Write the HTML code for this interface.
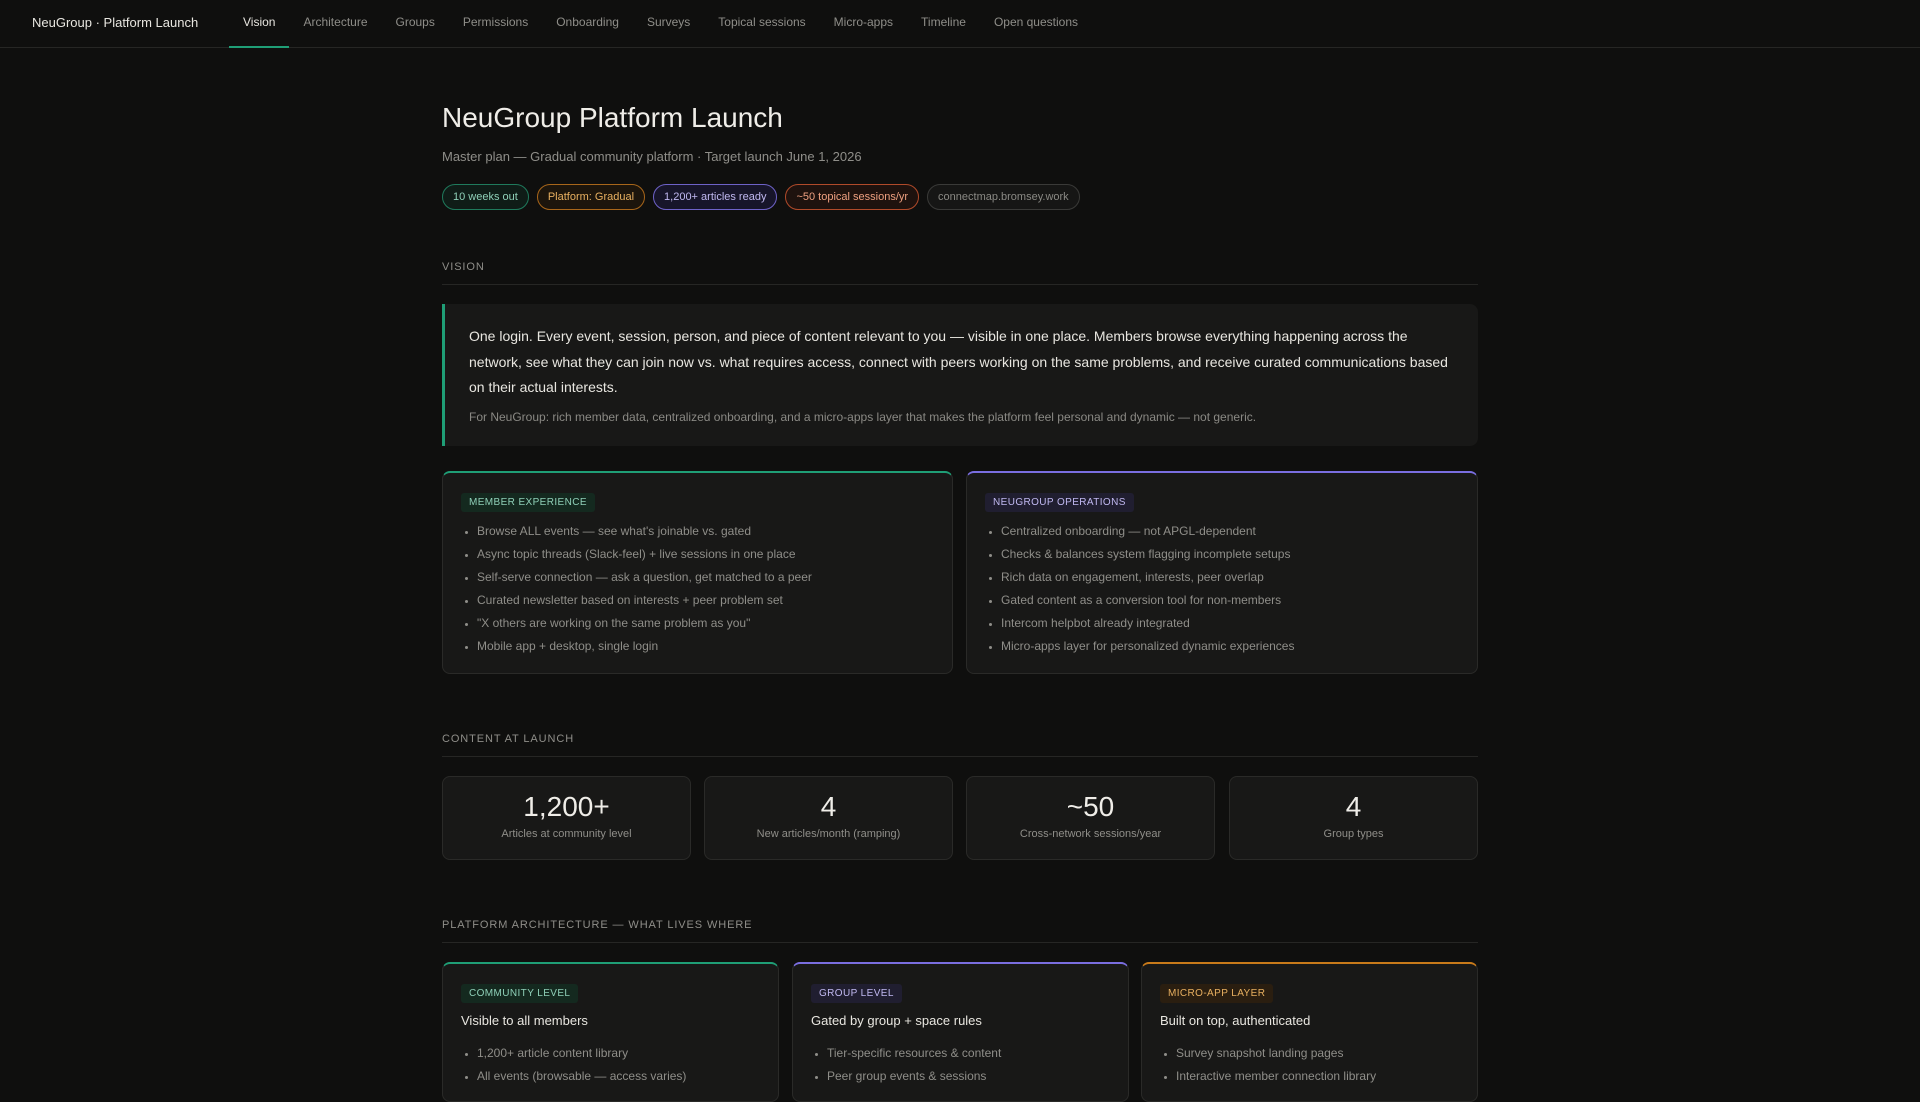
<!DOCTYPE html>
<html><head><meta charset="utf-8"><style>
*{box-sizing:border-box;margin:0;padding:0}
body{width:1920px;height:1080px;overflow:hidden;background:#0f0f0e;font-family:"Liberation Sans",sans-serif;color:#e8e6e0}
.nav{height:48px;border-bottom:1px solid #262624;display:flex;align-items:center;position:relative}
.brand{position:absolute;left:32px;top:15px;font-size:13px;color:#e8e6e0}
.links{position:absolute;left:229px;top:0;display:flex;height:47px}
.links a{font-size:12px;color:#8f8e89;padding:0 14px;line-height:45px;text-decoration:none;position:relative}
.links a.act{color:#e8e6e0}
.links a.act:after{content:"";position:absolute;left:0;right:0;bottom:-1px;height:2px;background:#1f9e76}
.wrap{position:absolute;left:442px;width:1036px;top:0}
h1{position:absolute;top:102px;font-size:28px;font-weight:400;color:#efede8}
.sub{position:absolute;top:149px;font-size:13px;color:#8f8e89}
.pills{position:absolute;top:184px;display:flex;gap:8px}
.pill{height:26px;border-radius:13px;border:1px solid;font-size:11px;line-height:24px;padding:0 10px}
.lbl{position:absolute;font-size:11px;letter-spacing:0.9px;color:#8f8e89;width:1036px;border-bottom:1px solid #262624;padding-bottom:11px}
.quote{position:absolute;top:304px;width:1036px;height:142px;background:#181817;border-left:3px solid #1f9e76;border-radius:0 8px 8px 0;padding:20px 24px 0 24px}
.quote p{font-size:14px;line-height:25.5px;color:#e8e6e0;white-space:nowrap}
.quote .s{font-size:12px;color:#8a8984;margin-top:8px;line-height:16px}
.card{position:absolute;background:#181817;border:1px solid #2a2a28;border-radius:8px;border-top:2px solid}
.tag{display:inline-block;font-size:10px;letter-spacing:.4px;padding:4px 8px;border-radius:3px}
ul{list-style:disc;padding-left:16px;margin-top:8px}
li{font-size:12px;color:#8f8e89;line-height:23px}
li::marker{font-size:10px}
.stat{position:absolute;top:776px;width:249px;height:84px;background:#181817;border:1px solid #2a2a28;border-radius:8px;text-align:center}
.stat b{display:block;font-weight:400;font-size:28px;margin-top:14px;color:#efede8}
.stat span{display:block;font-size:11px;color:#8f8e89;margin-top:5px}
.ttl{font-size:13px;color:#e8e6e0;margin-top:10px}
</style></head><body>
<div class="nav"><div class="brand">NeuGroup · Platform Launch</div>
<div class="links"><a class="act">Vision</a><a>Architecture</a><a>Groups</a><a>Permissions</a><a>Onboarding</a><a>Surveys</a><a>Topical sessions</a><a>Micro-apps</a><a>Timeline</a><a>Open questions</a></div></div>
<div class="wrap">
<h1>NeuGroup Platform Launch</h1>
<div class="sub">Master plan — Gradual community platform · Target launch June 1, 2026</div>
<div class="pills">
<div class="pill" style="border-color:#1f7a5c;color:#8fd0b8;background:#0f1c17">10 weeks out</div>
<div class="pill" style="border-color:#a8661a;color:#e8b060;background:#1c150c">Platform: Gradual</div>
<div class="pill" style="border-color:#6e62c8;color:#c0b8f0;background:#17152a">1,200+ articles ready</div>
<div class="pill" style="border-color:#b04a2a;color:#eea080;background:#1e120e">~50 topical sessions/yr</div>
<div class="pill" style="border-color:#3a3a38;color:#8a8984;background:#161615">connectmap.bromsey.work</div>
</div>
<div class="lbl" style="top:261px">VISION</div>
<div class="quote"><p>One login. Every event, session, person, and piece of content relevant to you — visible in one place. Members browse everything happening across the<br>network, see what they can join now vs. what requires access, connect with peers working on the same problems, and receive curated communications based<br>on their actual interests.</p>
<div class="s">For NeuGroup: rich member data, centralized onboarding, and a micro-apps layer that makes the platform feel personal and dynamic — not generic.</div></div>
<div class="card" style="top:471px;left:0;width:511px;height:203px;border-top-color:#1f9e76;padding:19px 18px">
<span class="tag" style="background:#14291f;color:#8fd0b8">MEMBER EXPERIENCE</span>
<ul><li>Browse ALL events — see what's joinable vs. gated</li><li>Async topic threads (Slack-feel) + live sessions in one place</li><li>Self-serve connection — ask a question, get matched to a peer</li><li>Curated newsletter based on interests + peer problem set</li><li>"X others are working on the same problem as you"</li><li>Mobile app + desktop, single login</li></ul></div>
<div class="card" style="top:471px;left:524px;width:512px;height:203px;border-top-color:#7a6ee0;padding:19px 18px">
<span class="tag" style="background:#201e30;color:#c0b8f0">NEUGROUP OPERATIONS</span>
<ul><li>Centralized onboarding — not APGL-dependent</li><li>Checks &amp; balances system flagging incomplete setups</li><li>Rich data on engagement, interests, peer overlap</li><li>Gated content as a conversion tool for non-members</li><li>Intercom helpbot already integrated</li><li>Micro-apps layer for personalized dynamic experiences</li></ul></div>
<div class="lbl" style="top:733px">CONTENT AT LAUNCH</div>
<div class="stat" style="left:0"><b>1,200+</b><span>Articles at community level</span></div>
<div class="stat" style="left:262px"><b>4</b><span>New articles/month (ramping)</span></div>
<div class="stat" style="left:524px"><b>~50</b><span>Cross-network sessions/year</span></div>
<div class="stat" style="left:787px"><b>4</b><span>Group types</span></div>
<div class="lbl" style="top:919px">PLATFORM ARCHITECTURE — WHAT LIVES WHERE</div>
<div class="card" style="top:962px;left:0;width:337px;height:140px;border-top-color:#1f9e76;padding:19px 18px">
<span class="tag" style="background:#14291f;color:#8fd0b8">COMMUNITY LEVEL</span><div class="ttl">Visible to all members</div>
<ul style="margin-top:14px"><li>1,200+ article content library</li><li>All events (browsable — access varies)</li></ul></div>
<div class="card" style="top:962px;left:350px;width:337px;height:140px;border-top-color:#7a6ee0;padding:19px 18px">
<span class="tag" style="background:#201e30;color:#c0b8f0">GROUP LEVEL</span><div class="ttl">Gated by group + space rules</div>
<ul style="margin-top:14px"><li>Tier-specific resources &amp; content</li><li>Peer group events &amp; sessions</li></ul></div>
<div class="card" style="top:962px;left:699px;width:337px;height:140px;border-top-color:#c87a1a;padding:19px 18px">
<span class="tag" style="background:#2a1e10;color:#e8b060">MICRO-APP LAYER</span><div class="ttl">Built on top, authenticated</div>
<ul style="margin-top:14px"><li>Survey snapshot landing pages</li><li>Interactive member connection library</li></ul></div>
</div>
</body></html>
